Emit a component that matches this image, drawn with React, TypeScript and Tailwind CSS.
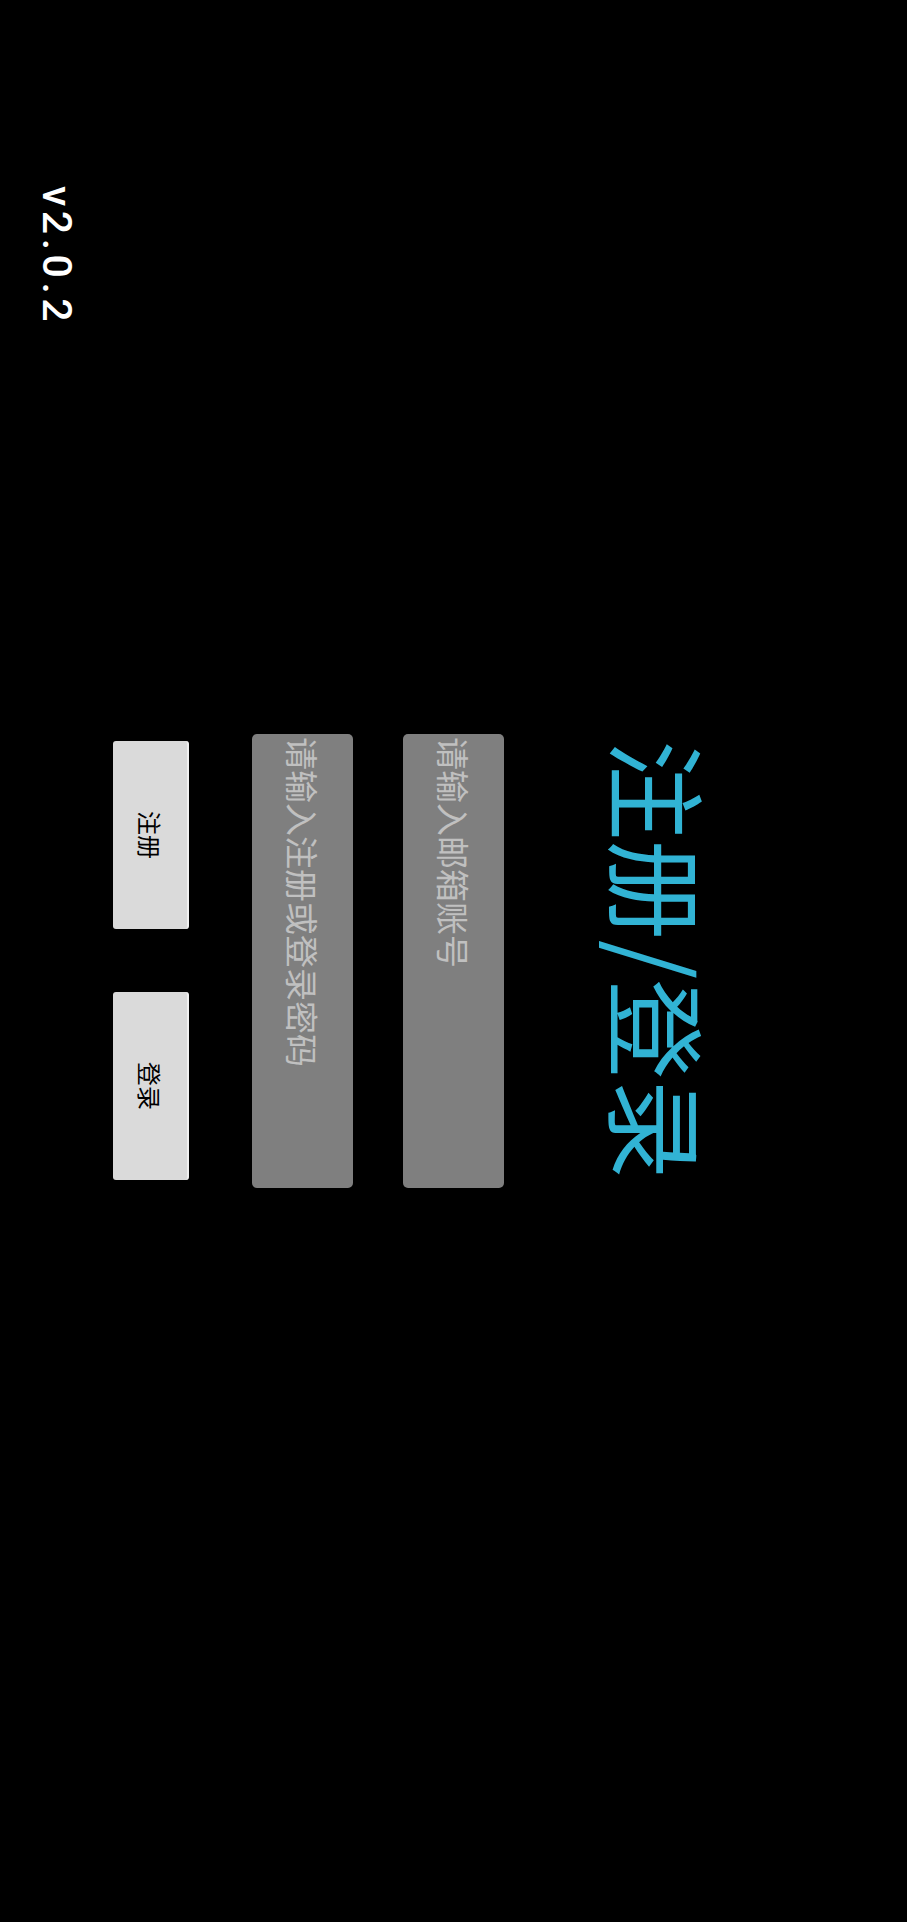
const cjk = "font-['Noto_Sans_CJK_SC','Noto_Sans',sans-serif]";

export default function App() {
  return (
    <div className="w-[907px] h-[1922px] bg-black overflow-hidden">
      {/* the whole screen is laid out sideways: block flow right to left, text top to bottom */}
      <div
        className={`w-full h-full flex flex-col items-start pr-[197px] [writing-mode:vertical-rl] [text-orientation:sideways] ${cjk}`}
      >
        <h1 className="mt-[740px] text-[100px] leading-none font-normal text-[#31b3d4]">注册/登录</h1>

        <div className="mr-[106px] mt-[734px] w-[101px] h-[454px] rounded-[5px] bg-[#7f7f7f] pt-[3px] text-[33px] leading-[101px] text-[#c0c0c0]">
          请输入邮箱账号
        </div>

        <div className="mr-[50px] mt-[734px] w-[101px] h-[454px] rounded-[5px] bg-[#7f7f7f] pt-[3px] text-[33px] leading-[101px] text-[#c0c0c0]">
          请输入注册或登录密码
        </div>

        <div className="mr-[63px] mt-[741px] flex flex-row gap-[63px]">
          {['注册', '登录'].map((label) => (
            <button
              key={label}
              className="w-[76px] h-[188px] flex items-center justify-center rounded-[3px] bg-[#dadada] border-r-[2px] border-[#f0f0f0] text-[24px] leading-none text-black"
            >
              {label}
            </button>
          ))}
        </div>

        <p className="mr-[36px] mt-[186px] text-[41px] leading-none font-medium tracking-[0.11em] text-white font-['Roboto',sans-serif]">
          v2.0.2
        </p>
      </div>
    </div>
  );
}
